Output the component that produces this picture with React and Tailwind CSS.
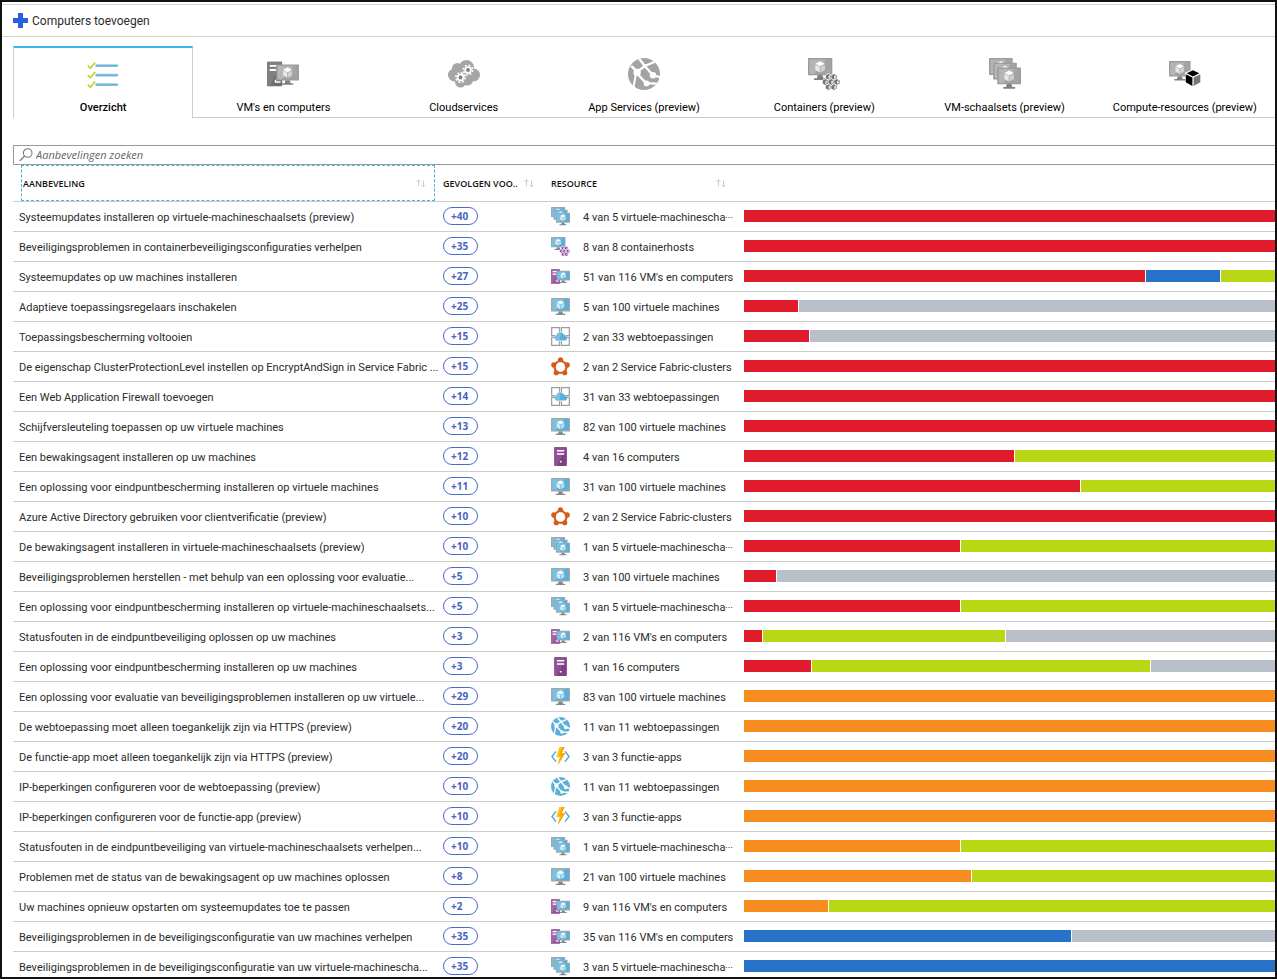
import React from "react";

const BLUE = { frame: "#a3a5a6", screen: "#5cb0d8", shine: "#7cc0e0", cubeTop: "#ffffff", cubeL: "#d5ecf7", cubeR: "#b4ddf0", base: "#85898b", tower: "#8d4f94", towerShine: "#a468aa", dot: "#8d4fa6" };
const GRAY = { frame: "#9c9c9c", screen: "#a3a3a3", shine: "#b5b5b5", cubeTop: "#ffffff", cubeL: "#e8e8e8", cubeR: "#d0d0d0", base: "#808080", tower: "#6f6f6f", towerShine: "#7f7f7f", dot: "#747474" };

function Monitor({ p, x = 0, y = 0, s = 1, stand = true }) {
  return (
    <g transform={`translate(${x} ${y}) scale(${s})`}>
      {stand && <path d="M8 15h4l.6 2.500H15V19H5v-1.500h2.400z" fill={p.base} />}
      <rect x="0" y="1" width="20" height="14.200" rx=".5" fill={p.frame} />
      <rect x="1.200" y="2.200" width="17.600" height="11.800" fill={p.screen} />
      <path d="M1.200 2.200H15L5 14H1.200Z" fill={p.shine} />
      <path d="M10 3.600l3.900 2.100L10 7.800 6.100 5.700z" fill={p.cubeTop} />
      <path d="M6 6.400l3.700 2v4.400L6 10.700z" fill={p.cubeL} />
      <path d="M14 6.400l-3.700 2v4.400l3.700-2.100z" fill={p.cubeR} />
    </g>
  );
}

function VmIcon({ p = BLUE }) {
  return <Monitor p={p} />;
}

function ScaleSetIcon({ p = BLUE }) {
  return (
    <>
      <Monitor p={p} x={0} y={-0.7} s={0.74} stand={false} />
      <Monitor p={p} x={2.600} y={2.200} s={0.74} stand={false} />
      <Monitor p={p} x={5.200} y={5.200} s={0.74} stand />
    </>
  );
}

function VmComputersIcon({ p = BLUE }) {
  return (
    <>
      <rect x="0" y="2.400" width="9.500" height="15.200" rx=".6" fill={p.tower} />
      <path d="M.6 2.400H9.500L1.500 17.600H.6A.6.6 0 0 1 0 17V3a.6.600 0 0 1 .6-.6Z" fill={p.towerShine} />
      <path d="M1.700 4.900h4.500M1.700 7.500h4" stroke="#fff" strokeWidth="1.200" />
      <Monitor p={p} x={5.800} y={3.300} s={0.71} />
      <path d="M5.300 13.600V15H8.500" fill="none" stroke="#fff" strokeWidth=".9" />
    </>
  );
}

function ContainerIcon({ p = BLUE }) {
  const hexes = [[11.500, 11.500], [15, 11.500], [9.600, 14.700], [13.200, 14.700], [16.800, 14.700], [11.500, 17.900], [15, 17.900]];
  return (
    <>
      <Monitor p={p} x={0} y={-0.7} s={0.76} />
      <g transform="translate(1.300 .3)">
        {hexes.map(([x, y]) => (
          <g key={`${x}-${y}`} transform={`translate(${x} ${y})`}>
            <path d="M0-2.200l2 1v2.400l-2 1-2-1v-2.400z" fill="#fff" />
            <path d="M0-1.800l1.700.9v1.800l-1.700.9-1.700-.9v-1.800z" fill={p.dot} />
            <path d="M0-.7L1.300-1.100V.8L0 1.300Z" fill="#fff" opacity=".75" />
          </g>
        ))}
      </g>
    </>
  );
}

function TowerIcon() {
  return (
    <>
      <rect x="3.500" y="0" width="13.200" height="20" rx="1" fill="#7f4186" />
      <path d="M4.500 0H16L6 20H4.500a1 1 0 0 1-1-1V1a1 1 0 0 1 1-1Z" fill="#8f5097" />
      <path d="M6.200 4h7.800M6.200 7.400h7.800" stroke="#fff" strokeWidth="1.500" />
      <circle cx="10.200" cy="15.400" r="1" fill="#fff" />
    </>
  );
}

function FirewallIcon() {
  return (
    <>
      <g fill="none" stroke="#9a9ea2" strokeWidth="1.300">
        <path d="M4.500 9H.7V.7H9V5" />
        <path d="M11 5V.7H19.300V9H15.500" />
        <path d="M4.500 11H.7V19.300H9V15" />
        <path d="M11 15V19.300H19.300V11H15.500" />
      </g>
      <path d="M6.300 14.200a2.700 2.700 0 0 1-.5-5.300 4 4 0 0 1 7.400-1.400 3.100 3.100 0 0 1 2.400 2.300 2.300 2.300 0 0 1-.4 4.400z" fill="#5cb0d8" />
      <path d="M6.300 14.200a2.700 2.700 0 0 1-.5-5.300 4 4 0 0 1 4.700-2.900L8.600 14.200z" fill="#7cc0e0" />
    </>
  );
}

function FabricIcon() {
  const nodes = [[10, 2.900], [17.100, 8.300], [14.500, 16.600], [5.500, 16.600], [2.900, 8.300]];
  return (
    <g fill="#d65a1b">
      <path d="M10 2.900L17.100 8.300 14.500 16.600H5.500L2.900 8.300Z" fill="none" stroke="#d65a1b" strokeWidth="2.300" />
      {nodes.map(([x, y]) => <circle key={`${x}-${y}`} cx={x} cy={y} r="2.700" />)}
    </g>
  );
}

function WebIcon({ color = "#5cb0d8" }) {
  return (
    <>
      <circle cx="10" cy="10" r="10" fill={color} />
      <g fill="none" stroke="#fff" strokeWidth="1.500">
        <path d="M7 .5L10.500 5" />
        <path d="M2 5L5.800 8.500 10.500 5 16.500 2.500" />
        <path d="M10.500 5L15.600 10.800 20 12" />
        <path d="M5.500 9.500L11.600 16M11 15.800L18 16" />
      </g>
      <path d="M5.200 8.500L3.500 18" stroke="#fff" strokeWidth="1.300" />
      <circle cx="5.700" cy="9" r="2.300" fill="#fff" />
      <circle cx="10.500" cy="5" r="1.300" fill="#fff" />
      <circle cx="15.600" cy="10.800" r="2" fill="#fff" />
      <circle cx="11.600" cy="15.900" r="1.800" fill="#fff" />
    </>
  );
}

function FunctionIcon() {
  return (
    <>
      <path d="M5.300 4.600L1 10l4.300 5.400M14.700 4.600L19 10l-4.300 5.400" fill="none" stroke="#59a9da" strokeWidth="1.600" />
      <path d="M8.700 0H14.500L11.200 6.500H15L7 19.200 9.200 10.700H5.500Z" fill="#fcc419" />
      <path d="M12 0h2.500L11.200 6.500H15L7 19.200 10.500 9H8.300Z" fill="#f5a80f" />
    </>
  );
}

const resourceIcons = { vm: VmIcon, set: ScaleSetIcon, vmc: VmComputersIcon, cont: ContainerIcon, tower: TowerIcon, fw: FirewallIcon, fabric: FabricIcon, web: WebIcon, fn: FunctionIcon };

function ChecklistIcon() {
  return (
    <>
      {[4, 13.500, 23].map((y) => (
        <g key={y} fill="none">
          <path d={`M.8 ${y + 1.500}l2.500 2.700L8.200 ${y - 1.500}`} stroke="#b8d432" strokeWidth="1.700" />
          <path d={`M9.500 ${y + 1.500}H30`} stroke="#c4e2f1" strokeWidth="3" strokeLinecap="round" />
          <path d={`M9.500 ${y + 1.800}H30`} stroke="#69b4d8" strokeWidth="2" strokeLinecap="round" />
        </g>
      ))}
    </>
  );
}

function Gear({ x, y }) {
  return (
    <g transform={`translate(${x} ${y})`}>
      <circle r="4.600" fill="none" stroke="#fff" strokeWidth="1.700" strokeDasharray="1.900 1.710" />
      <circle r="3.700" fill="#fff" />
      <circle r="1.900" fill="#7d7d7d" />
    </g>
  );
}

function CloudIcon() {
  return (
    <>
      <g fill="#a5a5a5">
        <circle cx="6.500" cy="17" r="6.500" />
        <circle cx="9.500" cy="10.500" r="5.500" />
        <circle cx="18.500" cy="9.500" r="7.500" />
        <circle cx="25.500" cy="17" r="6.500" />
        <circle cx="19.500" cy="22" r="5.500" />
        <circle cx="12.500" cy="24" r="5.500" />
      </g>
      <Gear x={20} y={12} />
      <Gear x={12.500} y={19.500} />
    </>
  );
}

function ComputeIcon() {
  return (
    <>
      <Monitor p={GRAY} x={0} y={2} s={1.080} />
      <path d="M24 11.200l8 3.600v10.600L24 30l-8-4.600V14.800z" fill="#fff" />
      <path d="M24 12.200l6.300 3L24 18.400l-6.300-3.200z" fill="#000" />
      <path d="M16.700 16.200l6.700 3.300v8.600l-6.700-3.800z" fill="#000" />
      <path d="M31.300 16.200l-6.700 3.300v8.600l6.700-3.800z" fill="#777" />
    </>
  );
}

const scaled = (Icon) => () => (
  <g transform="scale(1.600)"><Icon p={GRAY} /></g>
);
const WebGray = () => <g transform="scale(1.600)"><WebIcon color="#a3a3a3" /></g>;

const tabs = [
  ["Overzicht", ChecklistIcon],
  ["VM's en computers", scaled(VmComputersIcon)],
  ["Cloudservices", CloudIcon],
  ["App Services (preview)", WebGray],
  ["Containers (preview)", scaled(ContainerIcon)],
  ["VM-schaalsets (preview)", scaled(ScaleSetIcon)],
  ["Compute-resources (preview)", ComputeIcon],
];

const colors = { r: "bg-[#df1b2c]", b: "bg-[#2871c8]", g: "bg-[#bad716]", n: "bg-[#bac0c9]", o: "bg-[#f78d1e]" };

const rows = [
  ["Systeemupdates installeren op virtuele-machineschaalsets (preview)", 40, "set", "4 van 5 virtuele-machinescha⋯", "r531"],
  ["Beveiligingsproblemen in containerbeveiligingsconfiguraties verhelpen", 35, "cont", "8 van 8 containerhosts", "r531"],
  ["Systeemupdates op uw machines installeren", 27, "vmc", "51 van 116 VM's en computers", "r401 b74 g54"],
  ["Adaptieve toepassingsregelaars inschakelen", 25, "vm", "5 van 100 virtuele machines", "r54 n476"],
  ["Toepassingsbescherming voltooien", 15, "fw", "2 van 33 webtoepassingen", "r65 n465"],
  ["De eigenschap ClusterProtectionLevel instellen op EncryptAndSign in Service Fabric  ...", 15, "fabric", "2 van 2 Service Fabric-clusters", "r531"],
  ["Een Web Application Firewall toevoegen", 14, "fw", "31 van 33 webtoepassingen", "r531"],
  ["Schijfversleuteling toepassen op uw virtuele machines", 13, "vm", "82 van 100 virtuele machines", "r531"],
  ["Een bewakingsagent installeren op uw machines", 12, "tower", "4 van 16 computers", "r270 g260"],
  ["Een oplossing voor eindpuntbescherming installeren op virtuele machines", 11, "vm", "31 van 100 virtuele machines", "r336 g194"],
  ["Azure Active Directory gebruiken voor clientverificatie (preview)", 10, "fabric", "2 van 2 Service Fabric-clusters", "r531"],
  ["De bewakingsagent installeren in virtuele-machineschaalsets (preview)", 10, "set", "1 van 5 virtuele-machinescha⋯", "r216 g314"],
  ["Beveiligingsproblemen herstellen - met behulp van een oplossing voor evaluatie...", 5, "vm", "3 van 100 virtuele machines", "r32 n498"],
  ["Een oplossing voor eindpuntbescherming installeren op virtuele-machineschaalsets...", 5, "set", "1 van 5 virtuele-machinescha⋯", "r216 g314"],
  ["Statusfouten in de eindpuntbeveiliging oplossen op uw machines", 3, "vmc", "2 van 116 VM's en computers", "r18 g242 n269"],
  ["Een oplossing voor eindpuntbescherming installeren op uw machines", 3, "tower", "1 van 16 computers", "r67 g338 n124"],
  ["Een oplossing voor evaluatie van beveiligingsproblemen installeren op uw virtuele...", 29, "vm", "83 van 100 virtuele machines", "o531"],
  ["De webtoepassing moet alleen toegankelijk zijn via HTTPS (preview)", 20, "web", "11 van 11 webtoepassingen", "o531"],
  ["De functie-app moet alleen toegankelijk zijn via HTTPS (preview)", 20, "fn", "3 van 3 functie-apps", "o531"],
  ["IP-beperkingen configureren voor de webtoepassing (preview)", 10, "web", "11 van 11 webtoepassingen", "o531"],
  ["IP-beperkingen configureren voor de functie-app (preview)", 10, "fn", "3 van 3 functie-apps", "o531"],
  ["Statusfouten in de eindpuntbeveiliging van virtuele-machineschaalsets verhelpen...", 10, "set", "1 van 5 virtuele-machinescha⋯", "o216 g314"],
  ["Problemen met de status van de bewakingsagent op uw machines oplossen", 8, "vm", "21 van 100 virtuele machines", "o227 g303"],
  ["Uw machines opnieuw opstarten om systeemupdates toe te passen", 2, "vmc", "9 van 116 VM's en computers", "o84 g446"],
  ["Beveiligingsproblemen in de beveiligingsconfiguratie van uw machines verhelpen", 35, "vmc", "35 van 116 VM's en computers", "b327 n203"],
  ["Beveiligingsproblemen in de beveiligingsconfiguratie van uw virtuele-machinescha...", 35, "set", "3 van 5 virtuele-machinescha⋯", "b531"],
];

function SortArrows() {
  return (
    <svg className="h-[9px] w-[10px] shrink-0" viewBox="0 0 10 9" fill="none" stroke="#ccc" strokeWidth="1" aria-hidden="true">
      <path d="M2.500 7V.8M.5 2.800l2-2 2 2M7.500 1.500V7.800M5.500 5.800l2 2 2-2" />
    </svg>
  );
}

function ResourceName({ text }) {
  const cut = text.endsWith("⋯");
  return (
    <span className="flex items-center whitespace-nowrap pt-0.5">
      {cut ? text.slice(0, -1) : text}
      {cut && <span className="text-[8px]">⋯</span>}
    </span>
  );
}

function SegmentBar({ segments }) {
  return (
    <div className="flex h-3 gap-px">
      {segments.split(" ").map((s) => (
        <div key={s} className={`basis-0 ${colors[s[0]]}`} style={{ flexGrow: Number(s.slice(1)) }} />
      ))}
    </div>
  );
}

export default function App() {
  return (
    <div className="flex h-screen flex-col overflow-hidden border-2 border-[#111] bg-white pt-[2px] font-['Roboto','Noto_Sans',sans-serif] text-[11px] leading-4 text-[#2b2b2b]">
      <header className="flex h-[33px] shrink-0 items-center border-y border-[#d4d4d4] pl-[11px]">
        <button type="button" className="flex items-center gap-1 text-xs">
          <svg className="size-[15px]" viewBox="0 0 15 15" aria-hidden="true">
            <path d="M5 0h5v5h5v5h-5v5H5v-5H0V5h5z" fill="#2b60dc" />
          </svg>
          Computers toevoegen
        </button>
      </header>

      <nav className="mt-[9px] grid h-[72px] shrink-0 grid-cols-7 pl-[11px]" role="tablist">
        {tabs.map(([label, Icon], i) => (
          <button
            key={label}
            type="button"
            role="tab"
            aria-selected={i === 0}
            className={`flex flex-col items-center gap-[10px] whitespace-nowrap text-black ${i === 0 ? "border-x border-t-2 border-x-[#ccc] border-t-[#41b6e6] pt-[10px] font-medium" : "border-b border-[#ccc] pt-[12px]"}`}
          >
            <svg className="size-8 shrink-0" viewBox={i === 0 ? "0 -2 32 32" : "0 0 32 32"} aria-hidden="true"><Icon /></svg>
            {label}
          </button>
        ))}
      </nav>

      <main className="mt-[27px] pl-[11px]">
        <label className="flex h-5 items-center gap-[3px] border-y border-l border-[#999] pl-[5px]">
          <svg className="size-[14px]" viewBox="0 0 14 14" fill="none" stroke="#777" strokeWidth="1.100" aria-hidden="true">
            <circle cx="8.700" cy="5" r="4.300" />
            <path d="M5.600 8L.6 13" />
          </svg>
          <input type="search" aria-label="Aanbevelingen zoeken" placeholder="Aanbevelingen zoeken" className="min-w-0 flex-1 font-['Open_Sans','Noto_Sans',sans-serif] italic outline-none placeholder:text-[#666]" />
        </label>

        <table className="w-full table-fixed border-separate border-spacing-0 text-left">
          <colgroup>
            <col className="w-[423px]" />
            <col className="w-[108px]" />
            <col className="w-[200px]" />
            <col />
          </colgroup>
          <thead className="font-['Open_Sans','Noto_Sans',sans-serif]">
            <tr className="h-[37px] text-[9px] text-[#111]">
              <th className="border-b border-[#ccc] p-0 pl-2 font-semibold">
                <button type="button" className="flex h-9 w-[414px] items-center justify-between border border-dashed border-[#41b6e6] pl-px pr-2">
                  <span className="pt-0.5">AANBEVELING</span><SortArrows />
                </button>
              </th>
              <th className="border-b border-[#ccc] p-0 pl-[7px] font-semibold">
                <button type="button" className="flex w-[91px] items-center justify-between whitespace-nowrap">
                  <span className="pt-0.5">GEVOLGEN VOO..</span><SortArrows />
                </button>
              </th>
              <th className="border-b border-[#ccc] p-0 pl-[7px] font-semibold">
                <button type="button" className="flex w-[175px] items-center justify-between">
                  <span className="pt-0.5">RESOURCE</span><SortArrows />
                </button>
              </th>
              <th className="border-b border-[#ccc] p-0" aria-label="Status" />
            </tr>
          </thead>
          <tbody>
            {rows.map(([name, impact, icon, resource, segments]) => {
              const Icon = resourceIcons[icon];
              return (
                <tr key={name} className="h-[30px]">
                  <td className="whitespace-nowrap border-b border-[#ccc] p-0 pl-[6px] pt-0.5">{name}</td>
                  <td className="border-b border-[#ccc] p-0 pb-px pl-[7px]">
                    <span className="flex h-[18px] w-[35px] items-center rounded-full border border-[#4a69cc] pl-[7px] font-['Open_Sans','Noto_Sans',sans-serif] text-[10px] font-bold text-[#4a62c0]">+{impact}</span>
                  </td>
                  <td className="border-b border-[#ccc] p-0 pl-[7px]">
                    <div className="flex items-center gap-[13px]">
                      <svg className="size-[19px] shrink-0" viewBox="0 0 20 20" aria-hidden="true"><Icon /></svg>
                      <ResourceName text={resource} />
                    </div>
                  </td>
                  <td className="border-b border-[#ccc] p-0 pb-px"><SegmentBar segments={segments} /></td>
                </tr>
              );
            })}
          </tbody>
        </table>
      </main>
    </div>
  );
}
